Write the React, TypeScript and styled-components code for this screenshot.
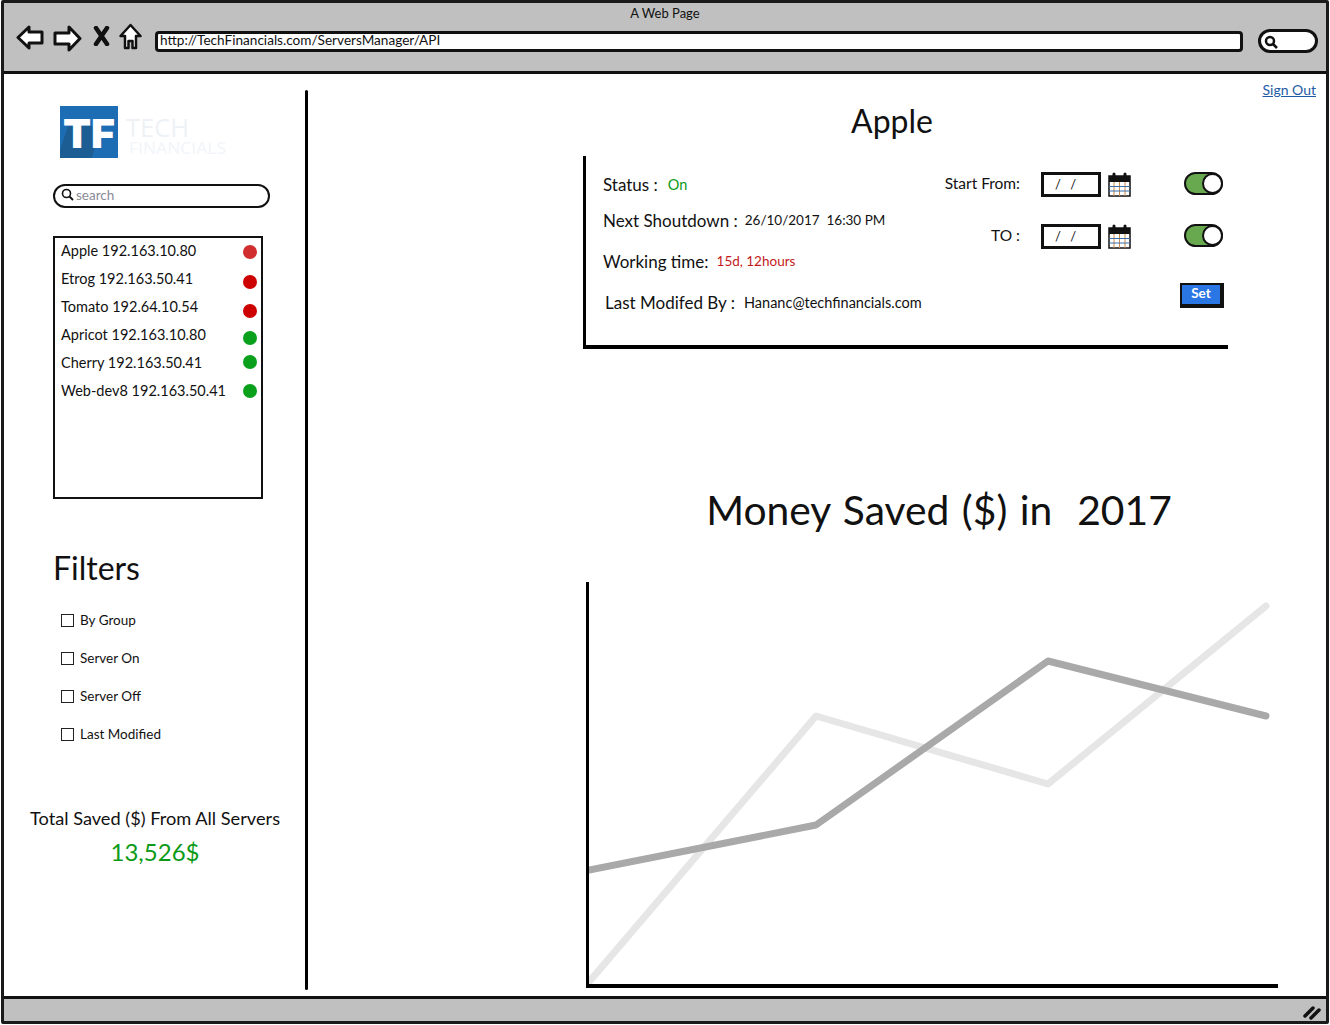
import React from 'react';
import styled, { createGlobalStyle } from 'styled-components';

const GlobalStyle = createGlobalStyle`
  html, body {
    margin: 0;
    padding: 0;
    background: #fff;
  }
  body {
    font-family: "Lato", "Noto Sans", sans-serif;
    color: #111;
  }
`;

const Win = styled.div`
  box-sizing: border-box;
  width: 1328px;
  height: 1024px;
  margin-left: 1px;
  border: 3px solid #1a1a1a;
  border-radius: 2px;
  display: flex;
  flex-direction: column;
  background: #fff;
`;

const TitleBar = styled.header`
  box-sizing: border-box;
  height: 71px;
  flex: none;
  background: #c0c0c0;
  border-bottom: 3px solid #111;
  padding-top: 2px;
`;

const WinTitle = styled.div`
  text-align: center;
  font-size: 13px;
  line-height: 16px;
`;

const NavRow = styled.div`
  display: flex;
  align-items: flex-start;
  margin-top: 4px;
  padding-left: 12px;
`;

const NavIcon = styled.svg<{ $gap: number; $top?: number }>`
  flex: none;
  margin-top: ${(p) => p.$top || 0}px;
  margin-right: ${(p) => p.$gap}px;
`;

const UrlBar = styled.div`
  box-sizing: border-box;
  width: 1088px;
  height: 21px;
  margin-top: 6px;
  background: #fff;
  border: 3px solid #111;
  border-radius: 4px;
  font-size: 13.6px;
  line-height: 13px;
  padding-left: 2px;
  white-space: nowrap;
`;

const BrowserSearch = styled.div`
  box-sizing: border-box;
  width: 60px;
  height: 24px;
  margin: 4px 0 0 15px;
  background: #fff;
  border: 3px solid #111;
  border-radius: 12px;
  padding: 3px 0 0 3px;
  display: flex;
`;

const Body = styled.div`
  flex: 1;
  display: flex;
  min-height: 0;
`;

const Sidebar = styled.aside`
  box-sizing: border-box;
  width: 301px;
  flex: none;
  padding: 32px 0 0 49px;
  display: flex;
  flex-direction: column;
`;

const Divider = styled.div`
  width: 3px;
  flex: none;
  margin: 16px 0 6px;
  background: #000;
  border-radius: 2px;
`;

const Logo = styled.svg`
  display: block;
  margin-left: 7px;
`;

const SearchBox = styled.div`
  box-sizing: border-box;
  width: 217px;
  height: 24px;
  margin-top: 26px;
  border: 2.5px solid #111;
  border-radius: 12px;
  display: flex;
  align-items: center;
  gap: 2px;
  padding: 0 0 3px 6px;
  color: #8a8a96;
  font-size: 13.5px;
`;

const ServerList = styled.ul`
  box-sizing: border-box;
  list-style: none;
  width: 210px;
  height: 263px;
  margin: 28px 0 0;
  padding: 0 4px 0 6px;
  border: 2.5px solid #111;
`;

const ServerRow = styled.li`
  height: 28px;
  display: flex;
  align-items: center;
  justify-content: space-between;
  font-size: 14.5px;
  line-height: 26px;
  white-space: nowrap;
`;

const ServerLabel = styled.span`
  transform: translateY(-1px);
`;

const Dot = styled.span<{ $color: string; $shift: number }>`
  width: 14px;
  height: 14px;
  border-radius: 50%;
  background: ${(p) => p.$color};
  transform: translateY(${(p) => p.$shift}px);
`;

const FiltersTitle = styled.h2`
  margin: 49px 0 0;
  font-size: 32px;
  font-weight: 400;
  line-height: 40px;
`;

const FilterList = styled.div`
  margin-top: 23px;
  padding-left: 8px;
  display: flex;
  flex-direction: column;
  gap: 20px;
`;

const FilterItem = styled.label`
  display: flex;
  align-items: center;
  gap: 6px;
  height: 18px;
  font-size: 13.5px;
`;

const Box = styled.span`
  box-sizing: border-box;
  width: 13px;
  height: 13px;
  border: 1.5px solid #222;
  background: #fff;
`;

const Totals = styled.div`
  width: 262px;
  margin: 64px 0 0 -29px;
  text-align: center;
`;

const TotalLabel = styled.div`
  font-size: 18.2px;
  line-height: 22px;
`;

const TotalValue = styled.div`
  margin-top: 7px;
  font-size: 24px;
  line-height: 32px;
  color: #0b9a17;
`;

const Main = styled.main`
  flex: 1;
  min-width: 0;
  display: flex;
  flex-direction: column;
  padding: 7px 10px 0 275px;
`;

const SignOut = styled.a`
  align-self: flex-end;
  font-size: 14px;
  line-height: 18px;
  color: #1f5aa6;
  text-decoration: underline;
`;

const ServerName = styled.h1`
  width: 618px;
  margin: 2px 0 0;
  text-align: center;
  font-size: 32px;
  font-weight: 400;
  line-height: 40px;
`;

const Panel = styled.section`
  box-sizing: border-box;
  width: 645px;
  height: 193px;
  margin-top: 15px;
  border-left: 3px solid #000;
  border-bottom: 4px solid #000;
  padding: 16px 0 0 17px;
  display: flex;
  justify-content: space-between;
`;

const Facts = styled.div`
  display: flex;
  flex-direction: column;
`;

const Fact = styled.div<{ $top: number; $indent?: number }>`
  margin-top: ${(p) => p.$top}px;
  padding-left: ${(p) => p.$indent || 0}px;
  display: flex;
  align-items: center;
  gap: 6px;
  height: 24px;
  font-size: 17px;
  white-space: nowrap;
`;

const FactValue = styled.span<{ $color?: string; $size?: number; $left?: number }>`
  margin-left: ${(p) => p.$left || 0}px;
  font-size: ${(p) => p.$size || 14.5}px;
  color: ${(p) => p.$color || '#111'};
`;

const Schedule = styled.div`
  width: 282px;
  margin-right: 4px;
  display: flex;
  flex-direction: column;
`;

const DateRow = styled.div`
  height: 52px;
  display: flex;
  align-items: flex-start;
  font-size: 15.5px;
`;

const DateLabel = styled.span`
  width: 78px;
  flex: none;
  text-align: right;
  line-height: 23px;
`;

const DateInput = styled.div`
  box-sizing: border-box;
  width: 60px;
  height: 25px;
  margin-left: 21px;
  border: 3px solid #111;
  font-size: 13px;
  line-height: 19px;
  padding-left: 11px;
  word-spacing: 6px;
`;

const CalIcon = styled.svg`
  flex: none;
  margin-left: 7px;
`;

const Toggle = styled.div`
  box-sizing: border-box;
  width: 39px;
  height: 23px;
  margin: 0 0 0 53px;
  border: 2.5px solid #111;
  border-radius: 12px;
  background: #68a94f;
  display: flex;
  justify-content: flex-end;
`;

const Knob = styled.span`
  box-sizing: border-box;
  width: 21px;
  height: 21px;
  margin: -1.5px -1.5px 0 0;
  border-radius: 50%;
  background: #fff;
  border: 2.5px solid #111;
`;

const SetButton = styled.button`
  box-sizing: border-box;
  align-self: flex-end;
  width: 44px;
  height: 25px;
  margin: 7px 0 0;
  padding: 0 0 3px;
  border: 2px solid #111;
  border-right-width: 4px;
  border-bottom-width: 4px;
  background: #2b76e5;
  color: #fff;
  font-family: inherit;
  font-size: 13.5px;
  font-weight: 700;
`;

const ChartTitle = styled.h2`
  width: 712px;
  margin: 136px 0 0;
  text-align: center;
  font-size: 40.8px;
  font-weight: 400;
  line-height: 50px;
  word-spacing: 2px;
  white-space: pre;
`;

const Chart = styled.div`
  box-sizing: border-box;
  width: 692px;
  height: 406px;
  margin: 47px 0 0 3px;
  border-left: 3px solid #000;
  border-bottom: 4px solid #000;
`;

const StatusBar = styled.footer`
  box-sizing: border-box;
  height: 25px;
  flex: none;
  background: #c0c0c0;
  border-top: 3px solid #111;
  display: flex;
  justify-content: flex-end;
  align-items: center;
  padding: 3px 3px 0 0;
`;

const servers = [
  { name: 'Apple 192.163.10.80', color: '#d12f2f', shift: 0 },
  { name: 'Etrog 192.163.50.41', color: '#cc0000', shift: 2 },
  { name: 'Tomato 192.64.10.54', color: '#cc0000', shift: 3 },
  { name: 'Apricot 192.163.10.80', color: '#09a01c', shift: 2 },
  { name: 'Cherry 192.163.50.41', color: '#09a01c', shift: -2 },
  { name: 'Web-dev8 192.163.50.41', color: '#09a01c', shift: -1 },
];

const filters = ['By Group', 'Server On', 'Server Off', 'Last Modified'];

const dates = ['Start From:', 'TO :'];

const Calendar = () => (
  <CalIcon width="23" height="25" viewBox="0 0 23 25">
    <rect x="1" y="4" width="21" height="20" fill="#fff" stroke="#111" strokeWidth="1.5" />
    <rect x="1" y="4" width="21" height="6" fill="#111" />
    <path d="M6 7V2M17 7V2" stroke="#111" strokeWidth="3" strokeLinecap="round" />
    <path d="M6 10v14M11.5 10v14M17 10v14" stroke="#c98a4a" strokeWidth="1" />
    <path d="M1 14.5h21M1 19h21" stroke="#3b6ea8" strokeWidth="1" />
  </CalIcon>
);

const App = () => (
  <>
    <GlobalStyle />
    <Win>
      <TitleBar>
        <WinTitle>A Web Page</WinTitle>
        <NavRow>
          <NavIcon $gap={9} width="28" height="25" viewBox="0 0 28 25">
            <path d="M2 12.5 13 2v5h13v11H13v5z" fill="#fff" stroke="#111" strokeWidth="3" strokeLinejoin="round" />
          </NavIcon>
          <NavIcon $gap={11} width="29" height="27" viewBox="0 0 29 27">
            <path d="M27 13.5 16 2v6H2v11h14v6z" fill="#fff" stroke="#111" strokeWidth="3" strokeLinejoin="round" />
          </NavIcon>
          <NavIcon $gap={9} $top={1} width="17" height="20" viewBox="0 0 17 20">
            <path d="M3 2 14 18M14 2 3 18" stroke="#111" strokeWidth="4.5" strokeLinecap="round" />
          </NavIcon>
          <NavIcon $gap={13} $top={-2} width="23" height="27" viewBox="0 0 23 27">
            <path d="M11.5 2 21.5 13H17v12h-3.5v-7h-4v7H6V13H1.5z" fill="#fff" stroke="#111" strokeWidth="2.5" strokeLinejoin="round" />
          </NavIcon>
          <UrlBar>http://TechFinancials.com/ServersManager/API</UrlBar>
          <BrowserSearch>
            <svg width="14" height="14" viewBox="0 0 14 14">
              <circle cx="6" cy="6" r="4" fill="none" stroke="#111" strokeWidth="2.5" />
              <path d="m9 9 4 4" stroke="#111" strokeWidth="2.5" />
            </svg>
          </BrowserSearch>
        </NavRow>
      </TitleBar>
      <Body>
        <Sidebar>
          <Logo width="180" height="52" viewBox="0 0 180 52">
            <rect width="58" height="52" fill="#1d6db5" />
            <path d="M0 52V44L8 20H40L32 52z" fill="#1c5e94" />
            <text x="3" y="42" fontFamily="Inter" fontSize="40" fontWeight="900" fill="#fff" textLength="52" lengthAdjust="spacingAndGlyphs">TF</text>
            <text x="66" y="31" fontFamily="Open Sans" fontSize="26" fill="#eef2f6" textLength="63" lengthAdjust="spacingAndGlyphs">TECH</text>
            <text x="69" y="48" fontFamily="Open Sans" fontSize="17" fill="#f1f5f9" textLength="97" lengthAdjust="spacingAndGlyphs">FINANCIALS</text>
          </Logo>
          <SearchBox>
            <svg width="13" height="13" viewBox="0 0 13 13">
              <circle cx="5.5" cy="5.5" r="4" fill="none" stroke="#111" strokeWidth="1.6" />
              <path d="m8.5 8.5 3.5 3.5" stroke="#111" strokeWidth="1.8" />
            </svg>
            search
          </SearchBox>
          <ServerList>
            {servers.map((s) => (
              <ServerRow key={s.name}>
                <ServerLabel>{s.name}</ServerLabel>
                <Dot $color={s.color} $shift={s.shift} />
              </ServerRow>
            ))}
          </ServerList>
          <FiltersTitle>Filters</FiltersTitle>
          <FilterList>
            {filters.map((f) => (
              <FilterItem key={f}>
                <Box />
                {f}
              </FilterItem>
            ))}
          </FilterList>
          <Totals>
            <TotalLabel>Total Saved ($) From All Servers</TotalLabel>
            <TotalValue>13,526$</TotalValue>
          </Totals>
        </Sidebar>
        <Divider />
        <Main>
          <SignOut>Sign Out</SignOut>
          <ServerName>Apple</ServerName>
          <Panel>
            <Facts>
              <Fact $top={0}>
                Status : <FactValue $color="#0b9a17" $left={4}>On</FactValue>
              </Fact>
              <Fact $top={12}>
                Next Shoutdown : <FactValue $size={13.5} $left={1}>26/10/2017 &nbsp;16:30 PM</FactValue>
              </Fact>
              <Fact $top={17}>
                Working time: <FactValue $color="#c41a1a" $size={13.5} $left={2}>15d, 12hours</FactValue>
              </Fact>
              <Fact $top={17} $indent={2}>
                Last Modifed By : <FactValue $left={3}>Hananc@techfinancials.com</FactValue>
              </Fact>
            </Facts>
            <Schedule>
              {dates.map((d) => (
                <DateRow key={d}>
                  <DateLabel>{d}</DateLabel>
                  <DateInput>/ /</DateInput>
                  <Calendar />
                  <Toggle>
                    <Knob />
                  </Toggle>
                </DateRow>
              ))}
              <SetButton>Set</SetButton>
            </Schedule>
          </Panel>
          <ChartTitle>Money Saved ($) in  2017</ChartTitle>
          <Chart>
            <svg width="689" height="402" viewBox="0 0 689 402">
              <polyline points="0,400 227,134 459,202 677,24" fill="none" stroke="#e6e6e6" strokeWidth="7" strokeLinecap="round" strokeLinejoin="round" />
              <polyline points="0,288 227,243 459,79 677,134" fill="none" stroke="#a9a9a9" strokeWidth="7" strokeLinecap="round" strokeLinejoin="round" />
            </svg>
          </Chart>
        </Main>
      </Body>
      <StatusBar>
        <svg width="20" height="16" viewBox="0 0 20 16">
          <path d="M2 12 10 4M8 14 16 6" stroke="#111" strokeWidth="3.5" strokeLinecap="round" />
        </svg>
      </StatusBar>
    </Win>
  </>
);

export default App;
